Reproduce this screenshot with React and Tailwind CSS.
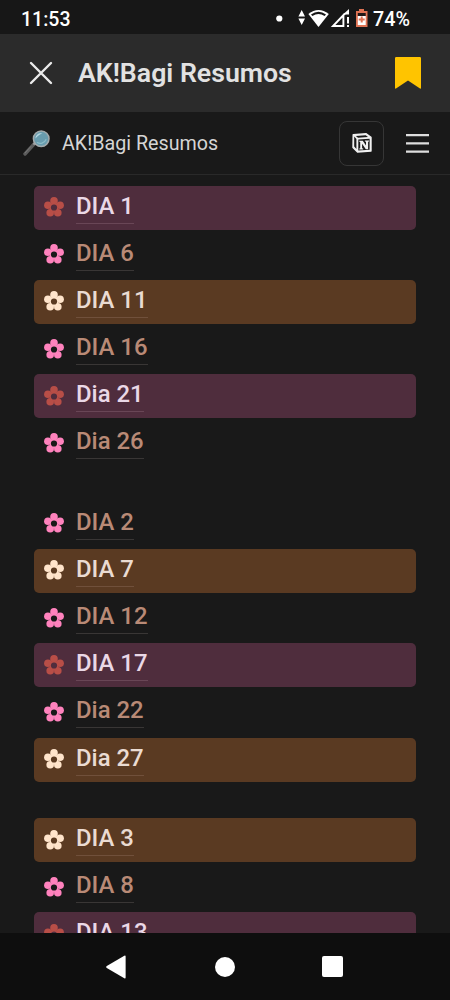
import React from 'react';
import { clsx } from 'clsx';

const groups = [
  [
    { label: 'DIA 1', tone: 'wine' },
    { label: 'DIA 6', tone: 'plain' },
    { label: 'DIA 11', tone: 'brown' },
    { label: 'DIA 16', tone: 'plain' },
    { label: 'Dia 21', tone: 'wine' },
    { label: 'Dia 26', tone: 'plain' },
  ],
  [
    { label: 'DIA 2', tone: 'plain' },
    { label: 'DIA 7', tone: 'brown' },
    { label: 'DIA 12', tone: 'plain' },
    { label: 'DIA 17', tone: 'wine' },
    { label: 'Dia 22', tone: 'plain' },
    { label: 'Dia 27', tone: 'brown' },
  ],
  [
    { label: 'DIA 3', tone: 'brown' },
    { label: 'DIA 8', tone: 'plain' },
    { label: 'DIA 13', tone: 'wine' },
  ],
];

const tones = {
  wine: { row: 'bg-[#4f2d3d]', flower: 'text-[#b84e47]', center: 'fill-[#4f2d3d]', label: 'text-[#ead8e6] border-[#694656]' },
  brown: { row: 'bg-[#5a3a22]', flower: 'text-[#ffe4cb]', center: 'fill-[#5a3a22]', label: 'text-[#eadbd2] border-[#70503b]' },
  plain: { row: '', flower: 'text-[#ff82bd]', center: 'fill-[#191919]', label: 'text-[#b98a76] border-[#393635]' },
};

const Flower = ({ className, center }) => (
  <svg viewBox="0 0 20 20" className={clsx('h-5 w-5 shrink-0', className)} fill="currentColor">
    <circle cx="10" cy="3.9" r="3.8" />
    <circle cx="16.1" cy="8.3" r="3.8" />
    <circle cx="13.8" cy="15.8" r="3.8" />
    <circle cx="6.2" cy="15.8" r="3.8" />
    <circle cx="3.9" cy="8.3" r="3.8" />
    <circle cx="10" cy="10.5" r="4.6" />
    <circle cx="10" cy="10.5" r="3.1" className={center} />
  </svg>
);

const DayRow = ({ label, tone }) => (
  <div className={clsx('flex h-[44px] items-start rounded-[5px] pl-[9.5px]', tones[tone].row)}>
    <Flower className={clsx('mt-[11.5px]', tones[tone].flower)} center={tones[tone].center} />
    <span
      className={clsx(
        'ml-[12.5px] h-[38px] border-b text-[23.9px] leading-[41px] font-medium whitespace-nowrap',
        tones[tone].label
      )}
    >
      {label}
    </span>
  </div>
);

const StatusBar = () => (
  <div className="flex h-[34px] shrink-0 items-center bg-[#171717] pt-[5px] pr-[40px] pl-[21px] text-white">
    <span className="text-[19.5px] leading-none font-medium">11:53</span>
    <svg viewBox="0 0 94 22" className="ml-auto h-[22px] w-[94px]" fill="white">
      <circle cx="3.3" cy="9.5" r="3.1" />
      <path d="M25.7 1 29 7.5H22.4ZM22.4 9.5H29L25.7 16Z" />
      <path d="M32.4 5Q42.5-3 52.8 5L42.5 18Z" />
      <path d="M35 5.4Q42.5.2 50 5.4L48.6 7Q42.5 3 36.4 7Z" className="fill-[#171717]" />
      <path d="M67.4 7V17H57L69 4.5" fill="none" stroke="white" strokeWidth="1.9" />
      <path d="M67 5.5 73 0V5.5ZM71 8H73V14.5H71ZM71 16H73V18H71Z" />
      <path d="M83 0H88V2H91.5V18H80V2H83Z" className="fill-[#df7354]" />
      <path d="M81.8 4H89.7V7H81.8Z" className="fill-[#211816]" />
      <path d="M81.8 7H89.7V16H81.8Z" />
      <path d="M85.7 7.5V13.5M82.7 10.5H88.7" className="stroke-[#df7354]" strokeWidth="2" />
    </svg>
    <span className="ml-[3.5px] text-[19.7px] leading-none font-medium">74%</span>
  </div>
);

const Magnifier = () => (
  <svg viewBox="0 0 28 28" className="h-7 w-7">
    <path d="m2 25 10-11" stroke="#5c5c5c" strokeWidth="3.4" strokeLinecap="round" />
    <path d="m2 24 6-6.7" stroke="#777" strokeWidth="1" />
    <path d="m10.5 15.5 2-2" stroke="#a1a3a5" strokeWidth="2" />
    <circle cx="18.2" cy="9.8" r="7.8" fill="#689cae" stroke="#a3aaac" strokeWidth="1.5" />
    <path d="M12.5 9.5c0-4 3.5-6 7-5.2-2 1-4.5 2.2-7 5.2Z" fill="#b6d8e2" />
    <path d="M14 13.2c3 2.5 7.5 1 9.2-3" fill="none" stroke="#8bbbc7" strokeWidth="1.2" />
  </svg>
);

const NotionMark = () => (
  <svg viewBox="0 0 20 20" className="h-5 w-5">
    <path d="M1.2 1.8 14.2.8 19 4.4V18L5.5 19 1 14.5Z" fill="#f1f1f1" stroke="#f1f1f1" strokeWidth="1.4" strokeLinejoin="round" />
    <path d="M2.2 3.6 4.4 6V16L2.2 13.6ZM3.8 2.9 13.7 2.2 16 3.9 6 4.7Z" className="fill-[#191919]" />
    <path d="M6.3 6.6 17.6 5.8V16.8L6.3 17.6Z" className="fill-[#191919]" />
    <path
      d="M7.3 7.7H10.8L14 12.6V8.8L12.9 8.5V7.5H17V8.5L16.1 8.8V16.2H13.8L10.1 10.8V15.2L11.2 15.5V16.5H7.3V15.5L8.2 15.2V9L7.3 8.7Z"
      fill="#f1f1f1"
    />
  </svg>
);

const App = () => {
  return (
    <div className="flex h-[1000px] w-[450px] flex-col overflow-hidden bg-[#191919] font-[Roboto,sans-serif]">
      <StatusBar />

      <header className="flex h-[78px] shrink-0 items-center bg-[#2b2b2b] pr-[29px] pl-[29px]">
        <svg viewBox="0 0 24 24" className="h-6 w-6" fill="none" stroke="#ebebeb" strokeWidth="2.4" strokeLinecap="round">
          <path d="m2 2 20 20M22 2 2 22" />
        </svg>
        <h1 className="ml-[25px] text-[26.7px] leading-none font-semibold text-[#e2e2e2]">AK!Bagi Resumos</h1>
        <svg viewBox="0 0 26 32" className="ml-auto h-8 w-[26px]">
          <path d="M1.2 0H24.8Q26 0 26 1.2V31Q26 32 25 31.5L13 23.5 1 31.5Q0 32 0 31V1.2Q0 0 1.2 0Z" fill="#ffc400" />
        </svg>
      </header>

      {/* page toolbar */}
      <div className="flex h-[63px] shrink-0 items-center border-b border-[#292929] pr-[21px] pl-[23px]">
        <Magnifier />
        <span className="ml-[11px] pt-[2px] text-[19.7px] leading-none text-[#d5d5d5]">AK!Bagi Resumos</span>
        <div className="ml-auto flex h-[45px] w-[45px] items-center justify-center rounded-lg border border-[#363636]">
          <NotionMark />
        </div>
        <svg viewBox="0 0 23 20" className="ml-[22px] h-5 w-[23px]" stroke="#dedede" strokeWidth="2.3">
          <path d="M0 2.2H23M0 10.4H23M0 18.6H23" />
        </svg>
      </div>

      <main className="flex min-h-0 flex-1 flex-col gap-[36.5px] overflow-hidden pt-[10.6px] pr-[34px] pl-[34px]">
        {groups.map((rows, index) => (
          <div key={index} className="flex flex-col gap-[3.15px]">
            {rows.map((row) => (
              <DayRow key={row.label} {...row} />
            ))}
          </div>
        ))}
      </main>

      <nav className="flex h-[67px] shrink-0 items-center justify-between bg-[#0e0e0e] pr-[107px] pl-[106px]">
        <svg viewBox="0 0 20 24" className="h-6 w-5" fill="white">
          <path d="M18.3.8Q19.6.1 19.6 1.5V22.5Q19.6 23.9 18.3 23.2L.8 13Q-.5 12 .8 11Z" />
        </svg>
        <div className="ml-px h-5 w-5 rounded-full bg-white" />
        <div className="h-[21px] w-[21px] rounded-[2px] bg-white" />
      </nav>
    </div>
  );
};

export default App;
